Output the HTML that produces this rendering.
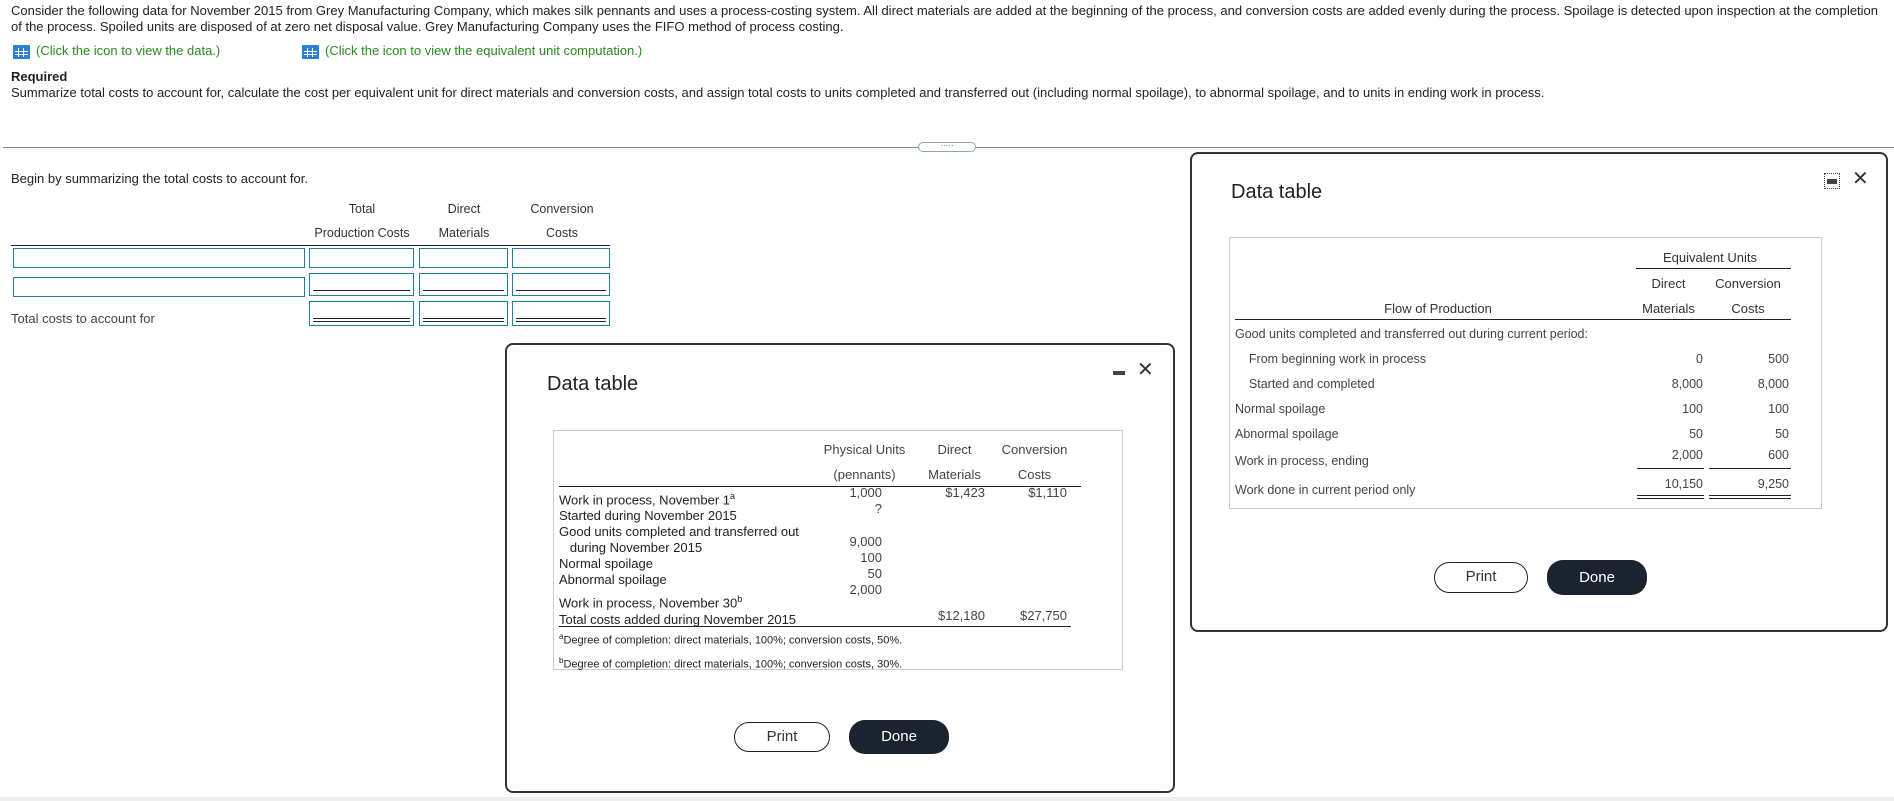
<!DOCTYPE html>
<html><head><meta charset="utf-8"><style>
*{margin:0;padding:0;box-sizing:border-box}
body{width:1894px;height:801px;background:#fff;font-family:"Liberation Sans",Arial,sans-serif;color:#222;position:relative;overflow:hidden;font-size:12px}
.a{position:absolute;white-space:nowrap}
.g{color:#2a8a1e}
.ic{position:absolute;width:17px;height:14px;background:#2a7fd4;border-radius:1px}
.ic:before{content:"";position:absolute;left:2px;top:3px;width:13px;height:9px;background:
linear-gradient(90deg,transparent 3px,#fff 3px,#fff 4px,transparent 4px,transparent 8px,#fff 8px,#fff 9px,transparent 9px),
linear-gradient(0deg,transparent 2px,#fff 2px,#fff 3px,transparent 3px,transparent 5px,#fff 5px,#fff 6px,transparent 6px)}
.box{position:absolute;border:1.5px solid #1f7f9c;background:#fff}
.ul{position:absolute;left:3px;right:3px;border-top:1.5px solid #222}
.dlg{position:absolute;background:#fff;border:2px solid #333;border-radius:8px}
.title{position:absolute;font-size:20px;color:#222}
.inner{position:absolute;border:1.5px solid #ccc}
.btn{position:absolute;border-radius:16px;font-size:15px;text-align:center}
.hl{position:absolute;border-top:1.5px solid #222}
.r{text-align:right}
.c{text-align:center}
.t13{font-size:13px}
</style></head><body>
<div class="a" style="left:11px;top:3px;font-size:13px;line-height:16px">Consider the following data for November 2015 from Grey Manufacturing Company, which makes silk pennants and uses a process-costing system. All direct materials are added at the beginning of the process, and conversion costs are added evenly during the process. Spoilage is detected upon inspection at the completion<br>of the process. Spoiled units are disposed of at zero net disposal value. Grey Manufacturing Company uses the FIFO method of process costing.</div>
<div class="ic" style="left:13px;top:45px"></div>
<div class="a g" style="left:36px;top:43px;font-size:13px">(Click the icon to view the data.)</div>
<div class="ic" style="left:302px;top:45px"></div>
<div class="a g" style="left:325px;top:43px;font-size:13px">(Click the icon to view the equivalent unit computation.)</div>
<div class="a" style="left:11px;top:69px;font-size:13px;font-weight:bold">Required</div>
<div class="a" style="left:11px;top:85px;font-size:13px">Summarize total costs to account for, calculate the cost per equivalent unit for direct materials and conversion costs, and assign total costs to units completed and transferred out (including normal spoilage), to abnormal spoilage, and to units in ending work in process.</div>
<div class="a" style="left:3px;top:147px;width:1891px;border-top:1.5px solid #888"></div>
<div class="a" style="left:918px;top:142px;width:58px;height:10px;border:1.5px solid #8aa;border-radius:6px;background:#fff;font-size:8px;line-height:5px;text-align:center;color:#556">·····</div>
<div class="a" style="left:11px;top:171px;font-size:13px">Begin by summarizing the total costs to account for.</div>
<div class="a c" style="left:300px;top:202px;width:124px;font-size:12.5px;color:#333">Total</div>
<div class="a c" style="left:300px;top:226px;width:124px;font-size:12.5px;color:#333">Production Costs</div>
<div class="a c" style="left:420px;top:202px;width:88px;font-size:12.5px;color:#333">Direct</div>
<div class="a c" style="left:420px;top:226px;width:88px;font-size:12.5px;color:#333">Materials</div>
<div class="a c" style="left:512px;top:202px;width:100px;font-size:12.5px;color:#333">Conversion</div>
<div class="a c" style="left:512px;top:226px;width:100px;font-size:12.5px;color:#333">Costs</div>
<div class="hl" style="left:11px;top:245px;width:599px"></div>
<div class="box" style="left:13px;top:248px;width:292px;height:20px"></div>
<div class="box" style="left:309px;top:248px;width:105px;height:20px"></div>
<div class="box" style="left:419px;top:248px;width:89px;height:20px"></div>
<div class="box" style="left:512px;top:248px;width:98px;height:20px"></div>
<div class="box" style="left:13px;top:277px;width:292px;height:20px"></div>
<div class="box" style="left:309px;top:273px;width:105px;height:23px"><div class="ul" style="top:16px"></div></div>
<div class="box" style="left:419px;top:273px;width:89px;height:23px"><div class="ul" style="top:16px"></div></div>
<div class="box" style="left:512px;top:273px;width:98px;height:23px"><div class="ul" style="top:16px"></div></div>
<div class="box" style="left:309px;top:301px;width:105px;height:25px"><div class="ul" style="top:16px"></div><div class="ul" style="top:19px"></div></div>
<div class="box" style="left:419px;top:301px;width:89px;height:25px"><div class="ul" style="top:16px"></div><div class="ul" style="top:19px"></div></div>
<div class="box" style="left:512px;top:301px;width:98px;height:25px"><div class="ul" style="top:16px"></div><div class="ul" style="top:19px"></div></div>
<div class="a" style="left:11px;top:311px;font-size:13px;color:#444">Total costs to account for</div>
<div class="a" style="left:0;top:797px;width:1894px;height:4px;background:#eee"></div>

<!-- dialog 1 -->
<div class="dlg" style="left:505px;top:343px;width:670px;height:450px">
<div class="title" style="left:40px;top:28px">Data table</div>
<div class="a" style="left:606px;top:26px;width:12px;height:4px;background:#444"></div>
<div class="a" style="left:630px;top:12px;font-size:20px;color:#333">✕</div>
<div class="inner" style="left:46px;top:85px;width:570px;height:240px"></div>
<div class="a c t13" style="left:300px;top:97px;width:115px;color:#444">Physical Units</div>
<div class="a c t13" style="left:300px;top:122px;width:115px;color:#444">(pennants)</div>
<div class="a c t13" style="left:410px;top:97px;width:75px;color:#444">Direct</div>
<div class="a c t13" style="left:410px;top:122px;width:75px;color:#444">Materials</div>
<div class="a c t13" style="left:485px;top:97px;width:85px;color:#444">Conversion</div>
<div class="a c t13" style="left:485px;top:122px;width:85px;color:#444">Costs</div>
<div class="hl" style="left:52px;top:141px;width:522px"></div>
<div class="a t13" style="left:52px;top:143px;line-height:16px">Work in process, November 1<sup style="font-size:9px">a</sup><br>Started during November 2015<br>Good units completed and transferred out<br>&nbsp;&nbsp;&nbsp;during November 2015<br>Normal spoilage<br>Abnormal spoilage<br><span style="display:block;margin-top:3px">Work in process, November 30<sup style="font-size:9px">b</sup></span>Total costs added during November 2015</div>
<div class="a t13 r" style="left:250px;top:140px;width:125px;line-height:16.2px;color:#444">1,000<br>?<br>&nbsp;<br>9,000<br>100<br>50<br>2,000</div>
<div class="a t13 r" style="left:400px;top:140px;width:78px;color:#444">$1,423</div>
<div class="a t13 r" style="left:480px;top:140px;width:80px;color:#444">$1,110</div>
<div class="a t13 r" style="left:400px;top:263px;width:78px;color:#444">$12,180</div>
<div class="a t13 r" style="left:480px;top:263px;width:80px;color:#444">$27,750</div>
<div class="hl" style="left:52px;top:281px;width:512px"></div>
<div class="a" style="left:52px;top:282px;font-size:11px;line-height:19px"><sup style="font-size:8px">a</sup>Degree of completion: direct materials, 100%; conversion costs, 50%.<br><sup style="font-size:8px">b</sup>Degree of completion: direct materials, 100%; conversion costs, 30%.</div>
<div class="btn" style="left:227px;top:377px;width:96px;height:30px;border:1.5px solid #222;line-height:27px;color:#333">Print</div>
<div class="btn" style="left:342px;top:375px;width:100px;height:34px;background:#1c2330;color:#fff;line-height:34px">Done</div>
</div>

<!-- dialog 2 -->
<div class="dlg" style="left:1190px;top:152px;width:698px;height:480px">
<div class="title" style="left:39px;top:27px">Data table</div>
<div class="a" style="left:632px;top:19px;width:16px;height:16px;border:1px dotted #444"></div>
<div class="a" style="left:635px;top:25px;width:10px;height:5px;background:#444"></div>
<div class="a" style="left:660px;top:12px;font-size:20px;color:#333">✕</div>
<div class="inner" style="left:37px;top:83px;width:593px;height:272px"></div>
<div class="a c t13" style="left:443px;top:96px;width:150px;color:#333">Equivalent Units</div>
<div class="hl" style="left:444px;top:114px;width:155px"></div>
<div class="a c t13" style="left:444px;top:122px;width:65px;color:#333">Direct</div>
<div class="a c t13" style="left:512px;top:122px;width:88px;color:#333">Conversion</div>
<div class="a c t13" style="left:444px;top:147px;width:65px;color:#333">Materials</div>
<div class="a c t13" style="left:512px;top:147px;width:88px;color:#333">Costs</div>
<div class="a c t13" style="left:46px;top:147px;width:400px;color:#333">Flow of Production</div>
<div class="hl" style="left:43px;top:165px;width:556px"></div>
<div class="a" style="left:43px;top:168px;font-size:12.5px;color:#444;line-height:25px">Good units completed and transferred out during current period:<br>&nbsp;&nbsp;&nbsp;&nbsp;From beginning work in process<br>&nbsp;&nbsp;&nbsp;&nbsp;Started and completed<br>Normal spoilage<br>Abnormal spoilage</div>
<div class="a" style="left:43px;top:300px;font-size:12.5px;color:#444">Work in process, ending</div>
<div class="a" style="left:43px;top:329px;font-size:12.5px;color:#444">Work done in current period only</div>
<div class="a r" style="left:444px;top:193px;width:67px;font-size:12.5px;color:#444;line-height:25px">0<br>8,000<br>100<br>50</div>
<div class="a r" style="left:517px;top:193px;width:80px;font-size:12.5px;color:#444;line-height:25px">500<br>8,000<br>100<br>50</div>
<div class="a r" style="left:444px;top:294px;width:67px;font-size:12.5px;color:#444">2,000</div>
<div class="a r" style="left:517px;top:294px;width:80px;font-size:12.5px;color:#444">600</div>
<div class="hl" style="left:445px;top:314px;width:67px"></div>
<div class="hl" style="left:517px;top:314px;width:82px"></div>
<div class="a r" style="left:444px;top:323px;width:67px;font-size:12.5px;color:#444">10,150</div>
<div class="a r" style="left:517px;top:323px;width:80px;font-size:12.5px;color:#444">9,250</div>
<div class="hl" style="left:445px;top:341px;width:67px"></div><div class="hl" style="left:445px;top:344px;width:67px"></div>
<div class="hl" style="left:517px;top:341px;width:82px"></div><div class="hl" style="left:517px;top:344px;width:82px"></div>
<div class="btn" style="left:242px;top:408px;width:94px;height:31px;border:1.5px solid #222;line-height:28px;color:#333">Print</div>
<div class="btn" style="left:355px;top:406px;width:100px;height:35px;background:#1c2330;color:#fff;line-height:35px">Done</div>
</div>
</body></html>
